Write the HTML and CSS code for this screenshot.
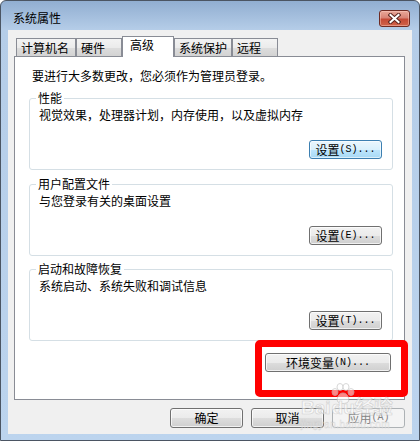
FILE: index.html
```html
<!DOCTYPE html>
<html lang="zh-CN">
<head>
<meta charset="utf-8">
<title>系统属性</title>
<link rel="stylesheet" href="styles.css">
</head>
<body>
<div class="window">
  <div class="titlebar">
    <span class="title">系统属性</span>
    <div class="close">
      <svg width="13" height="11" viewBox="0 0 13 11">
        <path d="M2.5 2 L10.5 9 M10.5 2 L2.5 9" stroke="#5a2620" stroke-width="4" stroke-linecap="square"/>
        <path d="M2.5 2 L10.5 9 M10.5 2 L2.5 9" stroke="#ffffff" stroke-width="2" stroke-linecap="square"/>
      </svg>
    </div>
  </div>
  <div class="client">
    <div class="tabs">
      <div class="tab w1">计算机名</div>
      <div class="tab w2">硬件</div>
      <div class="tab sel">高级</div>
      <div class="tab w4">系统保护</div>
      <div class="tab w5">远程</div>
    </div>
    <div class="panel">
      <div class="intro">要进行大多数更改，您必须作为管理员登录。</div>
      <div class="group g1">
        <div class="glabel">性能</div>
        <div class="gdesc">视觉效果，处理器计划，内存使用，以及虚拟内存</div>
        <div class="btn focus gbtn">设置<span class="mn">(S)...</span></div>
      </div>
      <div class="group g2">
        <div class="glabel">用户配置文件</div>
        <div class="gdesc">与您登录有关的桌面设置</div>
        <div class="btn gbtn">设置<span class="mn">(E)...</span></div>
      </div>
      <div class="group g3">
        <div class="glabel">启动和故障恢复</div>
        <div class="gdesc">系统启动、系统失败和调试信息</div>
        <div class="btn gbtn">设置<span class="mn">(T)...</span></div>
      </div>
      <div class="btn envbtn">环境变量<span class="mn">(N)...</span></div>
    </div>
    <div class="actions">
      <div class="btn abtn">确定</div>
      <div class="btn abtn">取消</div>
      <div class="btn abtn disabled">应用<span class="mn">(A)</span></div>
    </div>
  </div>
  <div class="highlight"></div>
  <div class="watermark">
    <svg class="paw" width="26" height="22" viewBox="0 0 26 22">
      <g fill="#ffffff" fill-opacity="0.75" stroke="#c8c8c8" stroke-width="1">
        <ellipse cx="5" cy="9" rx="3" ry="3.5"/>
        <ellipse cx="10" cy="4" rx="3" ry="3.5"/>
        <ellipse cx="16" cy="4" rx="3" ry="3.5"/>
        <ellipse cx="21" cy="9" rx="3" ry="3.5"/>
        <path d="M13 10 C8 10 6 17 8 19 C10 21 16 21 18 19 C20 17 18 10 13 10 Z"/>
      </g>
    </svg>
    <div class="wm-main">Bai<span class="wm-du">du</span>经验</div>
    <div class="wm-url">jingyan.baidu.com</div>
  </div>
</div>
</body>
</html>
```
FILE: styles.css
```css
html, body {
  margin: 0;
  padding: 0;
  background: #ffffff;
}

body {
  font-family: "Noto Sans CJK SC", "Noto Sans", sans-serif;
  font-size: 12px;
  line-height: 16px;
  color: #000000;
}

.window {
  position: relative;
  width: 420px;
  height: 441px;
  box-sizing: border-box;
  border: 1px solid #4b5563;
  border-radius: 6px 6px 0 0;
  background: linear-gradient(#91aed1 0px, #b5cde8 29px, #bcd4ee 100%);
  box-shadow: 0 1px 0 #1cb4d4;
  display: flex;
  flex-direction: column;
  overflow: hidden;
}

.titlebar {
  height: 29px;
  box-sizing: border-box;
  padding: 9px 9px 0 12px;
  display: flex;
  justify-content: space-between;
  align-items: flex-start;
}

.title {
  color: #000000;
}

.close {
  width: 31px;
  height: 17px;
  box-sizing: border-box;
  border: 1px solid #6e2b23;
  border-radius: 3px;
  background: linear-gradient(#e9a899 0%, #d88476 45%, #c44a36 55%, #d0634a 100%);
  box-shadow: inset 0 0 0 1px rgba(255, 210, 200, 0.45);
  display: flex;
  align-items: center;
  justify-content: center;
}

.close svg {
  display: block;
}

.client {
  margin: 0 7px 6px 7px;
  height: 404px;
  box-sizing: border-box;
  background: #f0f0f0;
  padding: 6px 7px 0 6px;
  display: flex;
  flex-direction: column;
}

.tabs {
  height: 20px;
  margin-left: 2px;
  display: flex;
  align-items: flex-end;
}

.tab {
  height: 18px;
  box-sizing: border-box;
  border: 1px solid #898c95;
  border-bottom: none;
  padding: 1px 0 0 4px;
  background: linear-gradient(#f3f3f3 0%, #ebebeb 50%, #dddddd 51%, #d3d3d3 100%);
  white-space: nowrap;
}

.w1 { width: 60px; }
.w2 { width: 46px; }
.w4 { width: 58px; }
.w5 { width: 46px; }

.tab.sel {
  width: 52px;
  height: 21px;
  margin-bottom: -1px;
  padding: 0 0 0 7px;
  background: #ffffff;
  position: relative;
  z-index: 1;
}

.panel {
  height: 344px;
  box-sizing: border-box;
  border: 1px solid #898c95;
  background: #ffffff;
  padding: 11px 11px 0 14px;
  display: flex;
  flex-direction: column;
}

.intro {
  margin-left: 3px;
}

.group {
  height: 72px;
  box-sizing: border-box;
  border: 1px solid #d5dfe5;
  border-radius: 3px;
  padding: 0 10px 10px 9px;
  display: flex;
  flex-direction: column;
}

.g1 { margin-top: 14px; }
.g2 { margin-top: 14px; }
.g3 { margin-top: 13px; }

.glabel {
  align-self: flex-start;
  margin: -9px 0 0 -3px;
  padding: 0 2px;
  background: #ffffff;
}

.gdesc {
  margin-top: 1px;
}

.btn {
  box-sizing: border-box;
  border: 1px solid #707070;
  border-radius: 3px;
  background: linear-gradient(#f2f2f2 0%, #ebebeb 50%, #dddddd 51%, #cfcfcf 100%);
  box-shadow: inset 0 0 0 1px rgba(255, 255, 255, 0.7);
  display: flex;
  align-items: center;
  justify-content: center;
  white-space: nowrap;
}

.btn.focus {
  border-color: #3c7fb1;
  background: linear-gradient(#eaf6fd 0%, #d9f0fc 50%, #bee6fd 51%, #a7d9f5 100%);
  box-shadow: inset 0 0 0 1px rgba(255, 255, 255, 0.6), 0 0 0 0 transparent;
}

.mn {
  font-family: "Liberation Mono", monospace;
  font-size: 10px;
}

.gbtn {
  width: 73px;
  height: 19px;
  margin-top: auto;
  align-self: flex-end;
}

.envbtn {
  width: 126px;
  height: 19px;
  margin-top: 12px;
  margin-right: 2px;
  align-self: flex-end;
}

.actions {
  margin-top: 8px;
  display: flex;
  justify-content: flex-end;
  gap: 8px;
}

.abtn {
  width: 73px;
  height: 20px;
}

.btn.disabled {
  border-color: #adb2b5;
  background: #f4f4f4;
  box-shadow: none;
  color: #838383;
}

.highlight {
  position: absolute;
  left: 254px;
  top: 339px;
  width: 153px;
  height: 57px;
  box-sizing: border-box;
  border: 7px solid #ff0000;
  border-radius: 5px;
}

.watermark {
  position: absolute;
  left: 300px;
  top: 382px;
  width: 110px;
  pointer-events: none;
  display: flex;
  flex-direction: column;
  align-items: flex-start;
  opacity: 0.7;
}

.paw {
  margin-left: 29px;
  display: block;
}

.wm-main {
  font-family: "Liberation Sans", "Noto Sans CJK SC", sans-serif;
  font-size: 19px;
  font-weight: bold;
  line-height: 18px;
  margin-top: -6px;
  color: rgba(255, 255, 255, 0.8);
  -webkit-text-stroke: 0.6px #c4c4c4;
}

.wm-du {
  margin-left: 1px;
}

.wm-url {
  font-family: "Liberation Sans", sans-serif;
  font-size: 10px;
  line-height: 12px;
  margin-top: 2px;
  letter-spacing: 0.5px;
  color: rgba(255, 255, 255, 0.8);
  -webkit-text-stroke: 0.4px #c8c8c8;
}
```
